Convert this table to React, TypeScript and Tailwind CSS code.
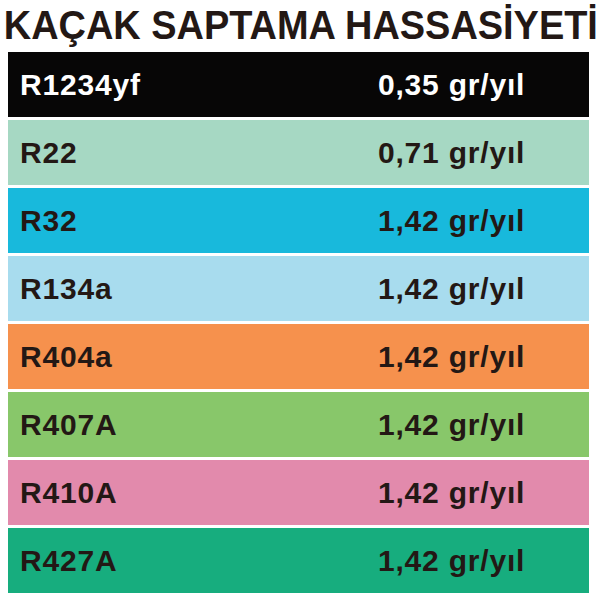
const rows = [
  { name: 'R1234yf', value: '0,35 gr/yıl', bg: 'bg-[#070606]', text: 'text-white' },
  { name: 'R22', value: '0,71 gr/yıl', bg: 'bg-[#a6d8c3]', text: 'text-[#231815]' },
  { name: 'R32', value: '1,42 gr/yıl', bg: 'bg-[#18b9dc]', text: 'text-[#231815]' },
  { name: 'R134a', value: '1,42 gr/yıl', bg: 'bg-[#a8dcee]', text: 'text-[#231815]' },
  { name: 'R404a', value: '1,42 gr/yıl', bg: 'bg-[#f6914d]', text: 'text-[#231815]' },
  { name: 'R407A', value: '1,42 gr/yıl', bg: 'bg-[#88c76a]', text: 'text-[#231815]' },
  { name: 'R410A', value: '1,42 gr/yıl', bg: 'bg-[#e28aac]', text: 'text-[#231815]' },
  { name: 'R427A', value: '1,42 gr/yıl', bg: 'bg-[#17ad7e]', text: 'text-[#231815]' },
]

export default function App() {
  return (
    <div className="h-[600px] w-[600px] overflow-hidden bg-white font-['Liberation_Sans',Arial,sans-serif]">
      <h1 className="origin-left scale-x-[0.948] whitespace-nowrap pl-[4px] pt-[5px] text-[40px] font-bold leading-none text-[#231815]">
        KAÇAK SAPTAMA HASSASİYETİ
      </h1>
      <ul className="ml-[8px] mt-[7px] flex w-[581px] flex-col gap-[3px]">
        {rows.map((r) => (
          <li
            key={r.name}
            className={`grid h-[65px] grid-cols-[358px_1fr] items-center pl-[12px] text-[30px] font-bold leading-none tracking-[0.8px] ${r.bg} ${r.text}`}
          >
            <span>{r.name}</span>
            <span>{r.value}</span>
          </li>
        ))}
      </ul>
    </div>
  )
}
